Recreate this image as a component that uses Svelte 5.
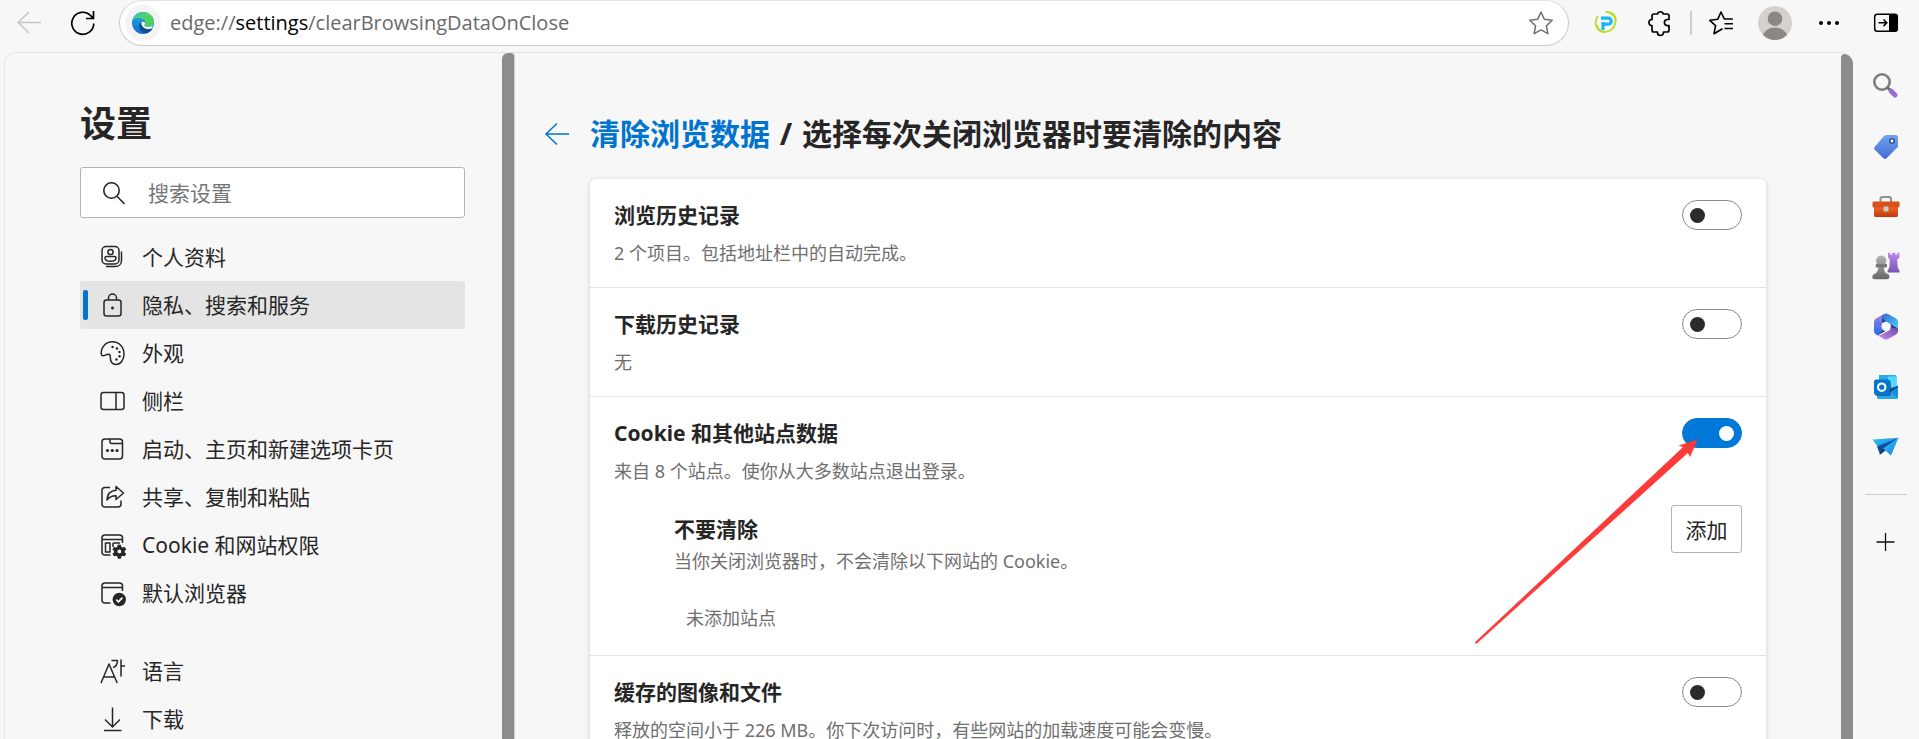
<script>
  const mainNav = [
    { id: 'profile', label: '个人资料' },
    { id: 'privacy', label: '隐私、搜索和服务', active: true },
    { id: 'appearance', label: '外观' },
    { id: 'sidebar', label: '侧栏' },
    { id: 'startup', label: '启动、主页和新建选项卡页' },
    { id: 'share', label: '共享、复制和粘贴' },
    { id: 'cookies', label: 'Cookie 和网站权限' },
    { id: 'default', label: '默认浏览器' }
  ];
  const moreNav = [
    { id: 'language', label: '语言' },
    { id: 'download', label: '下载' }
  ];

  let rows = $state([
    { id: 'history', title: '浏览历史记录', note: '2 个项目。包括地址栏中的自动完成。', on: false },
    { id: 'downloads', title: '下载历史记录', note: '无', on: false },
    { id: 'site-data', title: 'Cookie 和其他站点数据', note: '来自 8 个站点。使你从大多数站点退出登录。', on: true, exceptions: true },
    { id: 'cache', title: '缓存的图像和文件', note: '释放的空间小于 226 MB。你下次访问时，有些网站的加载速度可能会变慢。', on: false }
  ]);
</script>

{#snippet navIcon(id)}
  <svg class="nav-icon" viewBox="0 0 24 24" aria-hidden="true">
    {#if id === 'profile'}
      <rect x="2" y="1.5" width="17" height="17.5" rx="4" />
      <circle cx="10.5" cy="7" r="2.6" />
      <path d="M6.5 11.5h8c1 0 1.5.6 1.5 1.4 0 2.2-2.6 3.3-5.5 3.3S5 15.1 5 12.900c0-.8.5-1.400 1.500-1.400zM6 21.500h9.500c3.500 0 6-2.500 6-6V6.500" />
    {:else if id === 'privacy'}
      <rect x="4" y="7" width="17" height="16" rx="2.500" />
      <path d="M8.500 7V5a4 4 0 0 1 8 0v2" />
      <circle class="solid" cx="12.500" cy="15" r="1.500" />
    {:else if id === 'appearance'}
      <path d="M1.200 12.500C1 6 6 .800 12.300.800 19 .800 24 6 24 13c0 6-3.500 10.500-8 10.500-4.800 0-5.700-3.500-5.700-7.500 0-2-.8-2.700-2-2.700-2.300 0-3.600 1.700-5.300 1.500-1.300-.1-1.700-1-1.800-2.300z" />
      <circle class="solid" cx="12.500" cy="6" r="1.200" />
      <circle class="solid" cx="17" cy="7.500" r="1.200" />
      <circle class="solid" cx="19.500" cy="11" r="1.200" />
      <circle class="solid" cx="19.500" cy="15.200" r="1.200" />
      <circle class="solid" cx="16.500" cy="18.500" r="1.200" />
    {:else if id === 'sidebar'}
      <rect x="1" y="3.500" width="23" height="17" rx="2.500" />
      <path d="M16 3.500v17" />
    {:else if id === 'startup'}
      <rect x="2" y="2" width="20.500" height="20" rx="3" />
      <path d="M10 2v3a1.500 1.500 0 0 0 1.500 1.500H22" />
      <circle class="solid" cx="7.500" cy="13.500" r="1.600" />
      <circle class="solid" cx="12.300" cy="13.500" r="1.600" />
      <circle class="solid" cx="17" cy="13.500" r="1.600" />
    {:else if id === 'share'}
      <path d="M10 2.500H5a3 3 0 0 0-3 3V19a3 3 0 0 0 3 3h13a3 3 0 0 0 3-3v-3.500" />
      <path d="M16 1.500 23.500 8 16 14.500v-3.700c-4-.2-6.500 1-9 4.200.3-5.500 3.300-9.200 9-9.700z" />
    {:else if id === 'cookies'}
      <path d="M10.500 22H5a3 3 0 0 1-3-3V5a3 3 0 0 1 3-3h14.500a3 3 0 0 1 3 3v5M2 6.500h20.500M13 10h7M13 14v-4" />
      <rect x="5.500" y="10" width="4.500" height="9" />
      <path class="solid" fill-rule="evenodd" d="m17.800 11.500 3.200.1.500 2.300 1.600.8 2.300-.6 1.500 2.700-1.700 1.600v1.600l1.700 1.600-1.500 2.700-2.300-.6-1.500.8-.6 2.300h-3.200l-.6-2.300-1.500-.8-2.300.6-1.500-2.700 1.700-1.600v-1.600l-1.700-1.600 1.500-2.700 2.300.6 1.500-.8zM19.400 16.800a2 2 0 1 0 0 4.200 2 2 0 0 0 0-4.200z" transform="translate(1.500 1) scale(.92)" />
    {:else if id === 'default'}
      <path d="M10.500 22H5a3 3 0 0 1-3-3V5a3 3 0 0 1 3-3h14.500a3 3 0 0 1 3 3v5M2 6.500h20.500" />
      <circle class="solid" cx="19.300" cy="18.500" r="6.700" />
      <path class="white" d="m16.300 18.700 2.100 2.200 4-4.200" />
    {:else if id === 'language'}
      <path d="M1 24 9 5l8.200 19M4 18h10.500M11.500 1.500h6c0 4-1.300 6-4.500 7M21 .500v17M21 7h4" />
    {:else}
      <path d="M12.500.500v19M5 12.500l7.500 7.500 7.500-7.500M4 23.500h17.500" />
    {/if}
  </svg>
{/snippet}

{#snippet navList(items)}
  <ul class="nav-list">
    {#each items as item (item.id)}
      <li>
        <a href={'#' + item.id} class:active={item.active} aria-current={item.active ? 'page' : undefined}>
          {@render navIcon(item.id)}<span>{item.label}</span>
        </a>
      </li>
    {/each}
  </ul>
{/snippet}

<div class="browser" lang="zh-CN">
  <header class="toolbar">
    <button class="tool" aria-label="后退" disabled>
      <svg viewBox="0 0 24 24"><path d="M24 11.500H1.500M12 1 1.200 11.500 12 22" stroke="#c4c4c4" /></svg>
    </button>
    <button class="tool" aria-label="刷新">
      <svg viewBox="0 0 24 24"><path d="M22.800 12.500a11 11 0 1 1-3.400-8.200l2.800 2.900M22.500 0v7.500H15" stroke-width="1.700" /></svg>
    </button>

    <div class="address">
      <span class="site-mark">
        <svg viewBox="0 0 24 24" aria-hidden="true">
          <defs>
            <linearGradient id="edge-green" x1="0" y1="0" x2="1" y2="1"><stop offset="0" stop-color="#36c0d0" /><stop offset=".45" stop-color="#4fd46a" /><stop offset="1" stop-color="#4ecf52" /></linearGradient>
            <linearGradient id="edge-blue" x1="0" y1="0" x2="0" y2="1"><stop offset="0" stop-color="#27a5e6" /><stop offset="1" stop-color="#0f6fcb" /></linearGradient>
          </defs>
          <circle cx="12" cy="12" r="11" fill="url(#edge-blue)" />
          <path d="M1.500 9C3 3.800 7 1 12 1c6.500 0 11 4.600 11 9.500 0 3.500-2.500 5.500-5.600 5.500-2.600 0-4.200-.9-4.200-1.700 0-.6 1-1 1-2.800C14.200 8.600 11 7 7.600 7 5.200 7 3 7.700 1.500 9z" fill="url(#edge-green)" />
          <path d="M8.500 13c-1.500 5 2.500 9.500 7.500 8.900 2.200-.5 4.500-2.400 5.600-4.500-1.800 1-4.200 1.400-6.600.7-3.500-1-5-3.500-4.400-6.300-1 .2-1.700.6-2.100 1.200z" fill="#114a8b" />
          <path d="M10.600 11.300c.9-.7 2.700-.6 3.400.6.500 1-.9 1.600-.8 2.400.2.900 2 1.700 4.200 1.700 1.900 0 3.500-.7 4.400-1.700l-.6 3c-1.500.8-3.800 1.100-6 .4-3.800-1.100-5.200-3.800-4.600-6.400z" fill="#f5f5f5" />
        </svg>
      </span>
      <div class="url" role="textbox" tabindex="0" aria-label="地址栏" contenteditable="true" spellcheck="false">edge://<b>settings</b>/clearBrowsingDataOnClose</div>
      <button class="tool" aria-label="收藏此页">
        <svg viewBox="0 0 24 24"><path d="m12 1 3.300 7.300 7.900 1-5.800 5.500 1.500 7.900L12 18.900l-6.900 3.800 1.500-7.900L.8 9.300l7.900-1z" stroke="#6e6e6e" stroke-linejoin="round" /></svg>
      </button>
    </div>

    <div class="extensions">
      <button class="tool" aria-label="扩展程序 P">
        <svg viewBox="0 0 24 24">
          <path d="M12 1c5 .3 9 3.700 9.700 8M21.500 9c.3 6.500-4 11.500-9.500 11.700C7 21 3.500 18.500 2.600 14" stroke="#b5dc1e" stroke-width="1.700" />
          <path d="M11.500.800C17 .500 21.500 3.500 22 9.500M4 5C-.5 11 1.500 21 11.500 21.300" stroke="#b5dc1e" stroke-width="1.700" />
          <path d="M7 7.200h7.200a3 3 0 0 1 0 6H9.500M9 11v8" stroke="#15b8f5" stroke-width="3.200" />
        </svg>
      </button>
      <button class="tool" aria-label="扩展">
        <svg viewBox="0 0 24 24"><path d="M9.500 3a3 3 0 0 1 5.800 0h3.700A2 2 0 0 1 21 5v3.500h-1.500a3 3 0 0 0 0 6.200H21V19a2 2 0 0 1-2 2h-3.500v.5a3 3 0 0 1-6 0V21H6a2 2 0 0 1-2-2v-4.300a3 3 0 0 1 0-6.200V5a2 2 0 0 1 2-2z" stroke-width="1.700" stroke-linejoin="round" /></svg>
      </button>
    </div>
    <span class="divider"></span>
    <div class="account">
      <button class="tool" aria-label="收藏夹">
        <svg viewBox="0 0 24 24"><path d="M13.500 17.800 12.200 18.500 5 22.700l1.600-8L.8 9.300l7.900-1L12 1l3.300 7h8.500M15.500 12.700h8.500M15.500 17.500h8.500" stroke-width="1.600" stroke-linejoin="round" /></svg>
      </button>
      <button class="avatar" aria-label="个人资料">
        <svg viewBox="0 0 34 34"><circle cx="17" cy="17" r="17" fill="#d4d2ce" /><circle cx="17" cy="12.700" r="7.300" fill="#8b8784" /><path d="M5 29c1.500-4 6.200-7.500 12-7.500S27.500 25 29 29a17 17 0 0 1-24 0z" fill="#8b8784" /></svg>
      </button>
      <button class="tool" aria-label="设置及其他">
        <svg viewBox="0 0 24 24"><g fill="#000" stroke="none"><circle cx="4" cy="12" r="2" /><circle cx="12" cy="12" r="2" /><circle cx="20" cy="12" r="2" /></g></svg>
      </button>
    </div>
    <button class="tool panel-toggle" aria-label="边栏">
      <svg viewBox="0 0 24 24"><rect x=".7" y="3.200" width="22.600" height="17" rx="2.500" /><path d="M15 3h6a3 3 0 0 1 3 3v11.500a3 3 0 0 1-3 3h-6z" fill="#000" stroke="none" /><path d="M4.500 11.800h8M9.500 8.500l3.300 3.300-3.300 3.300" /></svg>
    </button>
  </header>

  <div class="body">
    <div class="page">
      <aside class="settings-menu">
        <h1>设置</h1>
        <label class="search">
          <svg viewBox="0 0 24 24" aria-hidden="true"><circle cx="9.500" cy="9.500" r="7.700" /><path d="m15 15.300 7.500 7.700" /></svg>
          <input type="text" placeholder="搜索设置" aria-label="搜索设置" />
        </label>
        <nav aria-label="设置">
          {@render navList(mainNav)}
          {@render navList(moreNav)}
        </nav>
      </aside>
      <div class="track menu-track"></div>

      <main>
        <div class="heading">
          <button class="tool back" aria-label="返回">
            <svg viewBox="0 0 24 24"><path d="M24 12H1M12 1.500 1 12l11 10.500" stroke="#0074cf" /></svg>
          </button>
          <h2><a href="#clear">清除浏览数据</a> <span class="slash">/</span> 选择每次关闭浏览器时要清除的内容</h2>
        </div>

        <section class="card">
          {#each rows as row (row.id)}
            <div class="row">
              <div class="entry">
                <div class="text">
                  <label class="title" for={row.id}>{row.title}</label>
                  <p>{row.note}</p>
                </div>
                <input class="switch" type="checkbox" role="switch" id={row.id} bind:checked={row.on} />
              </div>
              {#if row.exceptions}
                <div class="exceptions">
                  <div class="text">
                    <h3 class="title">不要清除</h3>
                    <p>当你关闭浏览器时，不会清除以下网站的 Cookie。</p>
                  </div>
                  <button class="add">添加</button>
                </div>
                <p class="empty">未添加站点</p>
              {/if}
            </div>
          {/each}
          <svg class="pointer" viewBox="0 0 222 204" aria-hidden="true">
            <path d="M0 202.500 208.500 7 204.500 5.500 222 0 215 16.500 213 12.500 1.500 203.500z" fill="#fc3a38" stroke="#fc3a38" stroke-width=".6" />
          </svg>
        </section>
      </main>
      <div class="track page-track"></div>
    </div>

    <aside class="rail" aria-label="边栏">
      <svg width="0" height="0" class="defs" aria-hidden="true">
        <defs>
          <linearGradient id="violet" x1="0" y1="0" x2="0" y2="1"><stop offset="0" stop-color="#bd86f0" /><stop offset="1" stop-color="#7c55b4" /></linearGradient>
          <linearGradient id="grey" x1="0" y1="0" x2="0" y2="1"><stop offset="0" stop-color="#b5b5b5" /><stop offset="1" stop-color="#666" /></linearGradient>
          <linearGradient id="tag" x1="0" y1="0" x2="0" y2="1"><stop offset="0" stop-color="#73a5f0" /><stop offset="1" stop-color="#416bd2" /></linearGradient>
          <linearGradient id="orange" x1="0" y1="0" x2="0" y2="1"><stop offset="0" stop-color="#f06a2b" /><stop offset="1" stop-color="#c33a0b" /></linearGradient>
          <linearGradient id="m1" x1="0" y1="0" x2="0" y2="1"><stop offset="0" stop-color="#a87de0" /><stop offset="1" stop-color="#1f6fe0" /></linearGradient>
          <linearGradient id="m2" x1="0" y1="0" x2="1" y2="1"><stop offset="0" stop-color="#3569d5" /><stop offset="1" stop-color="#4bd2f5" /></linearGradient>
          <linearGradient id="m3" x1="0" y1="1" x2="1" y2="0"><stop offset="0" stop-color="#cf93ee" /><stop offset="1" stop-color="#5f3f9f" /></linearGradient>
          <linearGradient id="plane" x1="0" y1="0" x2="1" y2="1"><stop offset="0" stop-color="#35c3f8" /><stop offset="1" stop-color="#0f83dc" /></linearGradient>
        </defs>
      </svg>
      <button aria-label="搜索">
        <svg viewBox="0 0 28 28"><circle cx="10" cy="10" r="7.700" fill="none" stroke="#7d7d7d" stroke-width="2.600" /><path d="m15.500 15.500 3 3" stroke="#666" stroke-width="2.600" /><path d="m19.200 19.200 3.800 3.800" stroke="#9f6bd6" stroke-width="5" stroke-linecap="round" /></svg>
      </button>
      <button aria-label="购物">
        <svg viewBox="0 0 28 28"><path d="M14 3h9.500A2.500 2.500 0 0 1 26 5.500v9.300L14.800 26a2.500 2.500 0 0 1-3.600 0L3 18a2.500 2.500 0 0 1 0-3.600L12 4z" fill="url(#tag)" /><circle cx="20" cy="9" r="2.200" fill="#fff" stroke="#3550a0" stroke-width="1.600" /></svg>
      </button>
      <button aria-label="工具">
        <svg viewBox="0 0 28 28"><path d="M8.500 10V7a2 2 0 0 1 2-2h6.500a2 2 0 0 1 2 2v3" fill="none" stroke="#8d9090" stroke-width="2" /><path d="M2 14h24v9.500a1.700 1.700 0 0 1-1.700 1.500H3.700A1.700 1.700 0 0 1 2 23.500z" fill="url(#orange)" /><path d="M1.500 9.500h25a1 1 0 0 1 1 1V14a1.500 1.500 0 0 1-1.500 1.500H2A1.500 1.500 0 0 1 .5 14v-3.500a1 1 0 0 1 1-1z" fill="#d9501a" /><rect x="11.500" y="14.500" width="5" height="5" rx="1.300" fill="#c9c9c9" /></svg>
      </button>
      <button aria-label="游戏">
        <svg viewBox="0 0 28 28"><path d="M16 .800h2.200v2h2V.800h3v2h2V.800h2.200v4.700l-2.200 2 .5 8 1.800 3.200v1.800H15.500v-1.800l1.800-3.200.5-8-1.800-2z" fill="url(#violet)" /><path d="M9.200 3.500a5.200 5.200 0 0 1 4.200 8.300 2 2 0 0 1 .1 3.800h-1.600c0 3 1 5 3 6.200 3.500.4 3.500 5.500 0 5.500H3c-3.500 0-3.500-5 0-5.500 2-1.200 3.200-3.200 3.400-6.200H4.800a2 2 0 0 1 .2-3.800 5.200 5.200 0 0 1 4.200-8.300z" fill="url(#grey)" /><path d="M4 12.200h11v3H4z" fill="#757575" /></svg>
      </button>
      <button aria-label="Microsoft 365">
        <svg viewBox="0 0 28 28"><path d="M12 2 4 6.500A4 4 0 0 0 2 10v9a4 4 0 0 0 2 3.500l1.500.8L14 18.500l-4-3V8z" fill="url(#m1)" /><path d="M10.500 3 13 1.700a4 4 0 0 1 3 .3l8 4.500A4 4 0 0 1 26 10v7l-7.500-3.500L10 10z" fill="url(#m2)" /><path d="M26 16.500V19a4 4 0 0 1-2 3.500l-8 4.500a4 4 0 0 1-4 0l-6.500-3.700 3-.3L18 18l1-5z" fill="url(#m3)" /><path d="M10.500 3 10 11.500l3.500-2.500-2-1.500zM5.500 23.300l8.500-4.500-2-1.500zM19 12.500l6.800 4-6.500-1z" fill="#20307c" opacity=".8" /><circle cx="14" cy="14.500" r="4.500" fill="#f7f7f7" /></svg>
      </button>
      <button aria-label="Outlook">
        <svg viewBox="0 0 28 28"><path d="M7 3h16a1.500 1.500 0 0 1 1.500 1.500V19H7z" fill="#2ba8e8" /><path d="M16 4.500h8.500V15H16z" fill="#50d9ff" /><path d="m26 14-9 5.500 8 7.300a1.500 1.500 0 0 0 1-1.300z" fill="#1490df" /><path d="m17 17.500 9-4v2l-8 4.500z" fill="#104a86" /><path d="M5 20h12l8.500 6.500-1 .5H6.500A1.500 1.500 0 0 1 5 25.500z" fill="#28a8ea" /><rect x="3" y="8.500" width="16" height="15.500" rx="2" fill="#13406f" opacity=".6" /><rect x="2" y="7.500" width="15.700" height="15.500" rx="2" fill="#0874d1" /><circle cx="9.700" cy="15.200" r="3.700" fill="none" stroke="#fff" stroke-width="2.200" /></svg>
      </button>
      <button aria-label="投递">
        <svg viewBox="0 0 28 28"><path d="m.5 7.500 26-1.700L6 15z" fill="url(#plane)" /><path d="m5 14.500 21.500-8.700L8 22.500z" fill="#10509b" /><path d="m11 16.500 15.500-10.700L19 23.500z" fill="url(#plane)" /><path d="m7.500 23 2-7 4 2.500z" fill="#0d3d7c" /></svg>
      </button>
      <hr />
      <button aria-label="自定义">
        <svg viewBox="0 0 28 28"><path d="M13.500 5v18M4.500 14h18" stroke="#111" stroke-width="1.300" /></svg>
      </button>
    </aside>
  </div>
</div>

<style>
  :global(body) { margin: 0; background: #f7f7f7; }
  .browser, .browser * { box-sizing: border-box; }
  .browser {
    height: 100vh;
    display: flex;
    flex-direction: column;
    overflow: hidden;
    color: #262626;
    font-family: "Noto Sans", "Noto Sans CJK SC", sans-serif;
    font-size: 21px;
  }
  button { padding: 0; border: 0; background: none; font: inherit; color: inherit; flex: none; }
  svg { display: block; overflow: visible; }
  h1, h2, h3, p, ul { margin: 0; padding: 0; }
  a { color: inherit; text-decoration: none; }

  .toolbar { display: flex; align-items: center; height: 46px; padding: 0 21px 0 17px; flex: none; }
  .tool { width: 24px; height: 24px; }
  .tool svg { width: 24px; height: 24px; fill: none; stroke: #000; stroke-width: 1.500; }
  .toolbar > .tool + .tool { margin-left: 30px; }
  .address {
    flex: 1;
    align-self: stretch;
    display: flex;
    align-items: center;
    margin-left: 24px;
    padding: 0 15px 0 5px;
    border: 1px solid #cbcbcb;
    border-top-color: #e2e2e2;
    border-radius: 23px;
    background: #fff;
  }
  .site-mark { display: grid; place-items: center; width: 36px; height: 36px; border-radius: 50%; background: #f4f4f4; }
  .site-mark svg { width: 24px; height: 24px; }
  .url { flex: 1; margin-left: 9px; font-family: "Open Sans", "Noto Sans CJK SC", sans-serif; font-size: 20px; line-height: 28px; color: #6a6a6a; white-space: nowrap; outline: 0; }
  .url b { font-weight: 400; color: #000; }
  .extensions { display: flex; gap: 30px; margin: 0 18px 0 25px; }
  .divider { width: 2px; height: 24px; background: #cfcfcf; }
  .account { display: flex; align-items: center; gap: 25px; margin-left: 17px; }
  .avatar, .avatar svg { width: 34px; height: 34px; }
  .panel-toggle { margin-left: 33px; }

  .body { flex: 1; display: flex; min-height: 0; padding: 6px 0 0 4px; }
  .page {
    flex: 1;
    display: flex;
    min-width: 0;
    border: 1px solid #e4e4e4;
    border-width: 1px 0 0 1px;
    border-radius: 12px 12px 0 0;
    overflow: hidden;
  }
  .settings-menu { width: 497px; flex: none; padding: 45px 37px 0 75px; overflow: hidden; }
  h1 { font-size: 36px; line-height: 52px; font-weight: 700; }
  .search {
    display: flex;
    align-items: center;
    gap: 22px;
    height: 51px;
    margin: 17px 0 15px;
    padding: 0 21px;
    border: 1px solid #b4b4b4;
    border-radius: 3px;
    background: #fff;
  }
  .search svg { width: 24px; height: 24px; flex: none; fill: none; stroke: #262626; stroke-width: 1.600; }
  .search input { flex: 1; min-width: 0; border: 0; outline: 0; padding: 0; background: none; font: inherit; color: inherit; }
  .search input::placeholder { color: #757575; opacity: 1; }
  .nav-list { list-style: none; }
  .nav-list + .nav-list { margin-top: 30px; }
  .nav-list a {
    position: relative;
    display: flex;
    align-items: center;
    gap: 18px;
    height: 48px;
    padding-left: 20px;
    border-radius: 3px;
    line-height: 30px;
    white-space: nowrap;
  }
  .nav-list a.active { background: #e4e4e4; }
  .nav-list a.active::before {
    content: "";
    position: absolute;
    left: 3px;
    top: 9px;
    bottom: 9px;
    width: 5px;
    border-radius: 2px;
    background: #0074cf;
  }
  .nav-icon { width: 24px; height: 24px; flex: none; fill: none; stroke: #262626; stroke-width: 1.500; stroke-linejoin: round; }
  .nav-icon .solid { fill: #262626; stroke: none; }
  .nav-icon .white { stroke: #fff; stroke-width: 1.700; }

  .track { width: 12px; flex: none; background: #8c8c8c; }
  .menu-track { width: 13px; border-right: 1px solid #cfcfcf; border-radius: 6px 4px 0 0; }
  .page-track { margin-top: 1px; border-radius: 6px 12px 0 0; }

  main { flex: 1; min-width: 0; padding: 59px 75px 0 30px; }
  .heading { display: flex; align-items: center; gap: 21px; margin-bottom: 23px; }
  h2 { font-size: 30px; line-height: 44px; font-weight: 700; white-space: nowrap; }
  h2 a { color: #0074cf; }
  .slash { margin: 0 2px; }
  .card {
    position: relative;
    margin-left: 45px;
    background: #fff;
    border-radius: 6px;
    box-shadow: 0 1px 5px rgba(0, 0, 0, .18);
  }
  .row { padding: 21px 24px 20px; border-bottom: 1px solid #e5e5e5; }
  .entry, .exceptions { display: flex; justify-content: space-between; align-items: flex-start; }
  .title { display: block; font-size: 21px; line-height: 30px; font-weight: 700; }
  .entry p { margin-top: 9px; }
  p { font-size: 18px; line-height: 28px; color: #6f6f6f; }
  .exceptions { margin: 20px 0 0 60px; }
  .exceptions .text { padding-top: 9px; }
  .exceptions p { margin-top: 3px; }
  .empty { margin: 29px 0 3px 72px; }
  .switch {
    appearance: none;
    display: flex;
    align-items: center;
    flex: none;
    width: 60px;
    height: 30px;
    margin: 0;
    padding: 0 7px;
    border: 1px solid #8a8a8a;
    border-radius: 15px;
    background: #fff;
  }
  .switch::before { content: ""; width: 15px; height: 15px; border-radius: 50%; background: #2b2b2b; }
  .switch:checked { justify-content: flex-end; background: #0078d7; border-color: #0078d7; }
  .switch:checked::before { background: #fff; }
  .add { width: 71px; height: 48px; border: 1px solid #b4b4b4; border-radius: 3px; background: #fff; }
  .pointer { position: absolute; right: 69px; top: 261px; width: 222px; height: 204px; pointer-events: none; }

  .rail { width: 66px; flex: none; display: flex; flex-direction: column; align-items: center; gap: 32px; padding-top: 20px; }
  .rail .defs { position: absolute; }
  .rail button, .rail button svg { width: 28px; height: 28px; }
  .rail hr { width: 42px; height: 1px; margin: 2px 0 1px; border: 0; background: #cdcdcd; flex: none; }
</style>
